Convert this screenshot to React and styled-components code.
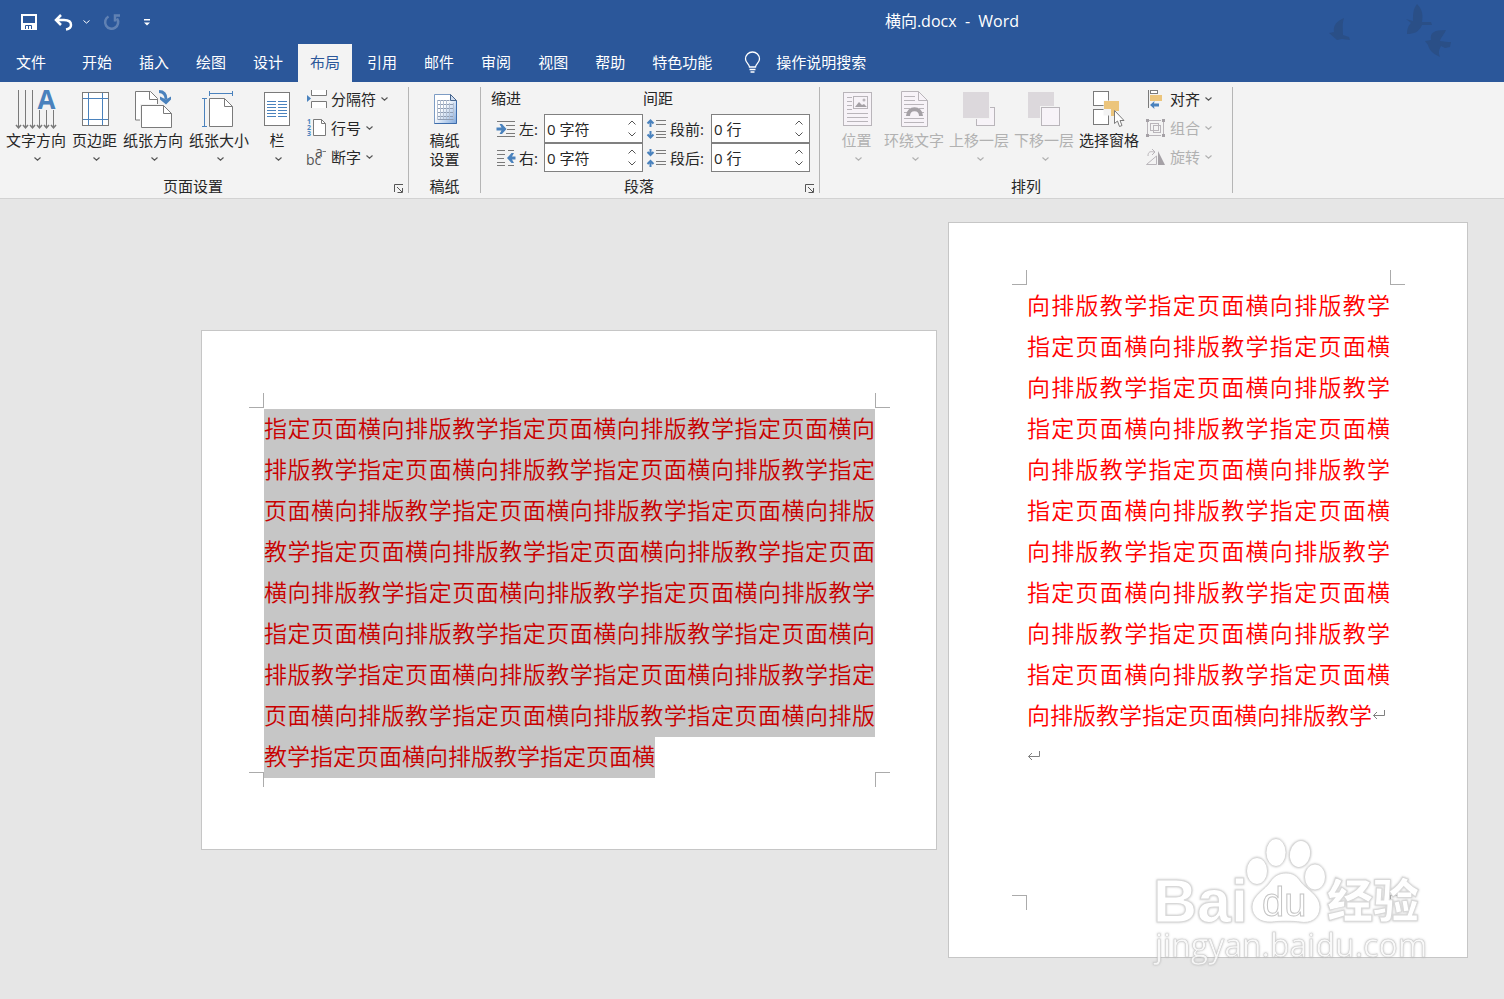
import React from 'react'
import styled, { createGlobalStyle } from "styled-components";

const GlobalStyle = createGlobalStyle`
    body {
        margin: 0;
        background: #e6e6e6;
    }

    button, input {
        font: inherit;
        color: inherit;
        margin: 0;
        padding: 0;
        border: 0;
        background: none;
    }

    svg {
        flex: none;
        overflow: visible;
    }
`

const App = styled.div`
    display: flex;
    flex-direction: column;
    min-height: 100vh;
    font-family: "Open Sans", "Noto Sans CJK SC", sans-serif;
    font-size: 15px;
    line-height: 20px;
    color: #262626;
`

/* title bar and tabs */

const Header = styled.header`
    position: relative;
    background: #2b579a;
    color: #fff;
`

const TitleBar = styled.div`
    display: flex;
    align-items: center;
    height: 44px;
`

const QuickAccess = styled.div`
    display: flex;
    align-items: center;
    width: 386px;
    padding-left: 14px;
`

const QuickButton = styled.button`
    display: flex;
    justify-content: center;
    width: ${props => props.$width}px;
    opacity: ${props => props.disabled ? 0.25 : 1};
`

const Title = styled.h1`
    flex: 1;
    margin: 0;
    padding-bottom: 2px;
    font-size: 16px;
    font-weight: 400;
    text-align: center;
    white-space: pre;
`

const Birds = styled.svg`
    position: absolute;
    top: 0;
    right: 40px;
`

const Tabs = styled.nav`
    display: flex;
    gap: 3px;
    height: 38px;
`

const Tab = styled.button`
    padding: 0 12px 2px;
    white-space: nowrap;
    background: ${props => props.$active ? "#f3f3f3" : "transparent"};
    color: ${props => props.$active ? "#2b579a" : "#fff"};
`

const FileTab = styled(Tab)`
    width: 67px;
    padding-left: 16px;
    text-align: left;
`

const TellMe = styled(Tab)`
    display: flex;
    align-items: center;
    gap: 15px;
    padding-left: 17px;
`

/* ribbon */

const Ribbon = styled.section`
    display: flex;
    padding: 5px 0;
    background: #f3f3f3;
    border-bottom: 1px solid #d2d2d2;
`

const Group = styled.div`
    display: flex;
    flex-direction: column;
    flex: none;
    box-sizing: border-box;
    width: ${props => props.$width}px;
    height: 106px;
    border-right: 1px solid #b5b5b5;
`

const GroupBody = styled.div`
    display: flex;
    flex: 1;
    gap: ${props => props.$gap || 0}px;
    padding-left: ${props => props.$indent || 0}px;
    justify-content: ${props => props.$center ? "center" : "flex-start"};
`

const GroupFooter = styled.div`
    display: flex;
    align-items: center;
    height: 14px;
    padding-right: ${props => props.$launcher ? 4 : 0}px;
`

const GroupName = styled.span`
    flex: 1;
    text-align: center;
    line-height: 14px;
`

const Launcher = styled.button`
    display: flex;
    align-items: flex-end;
    width: 10px;
    height: 14px;
    margin-left: 8px;
`

const BigButton = styled.button`
    display: flex;
    flex-direction: column;
    align-items: center;
    align-self: flex-start;
    min-width: ${props => props.$min || 0}px;
    padding-top: 2px;
    white-space: pre;
    color: ${props => props.disabled ? "#b1b1b1" : "#262626"};
`

const BigLabel = styled.span`
    line-height: 19px;
`

const BigArrow = styled.span`
    display: flex;
    align-items: center;
    height: 18px;
    padding-left: 3px;
`

const SmallColumn = styled.div`
    display: flex;
    flex-direction: column;
    gap: 5px;
`

const SmallButton = styled.button`
    display: flex;
    align-items: center;
    gap: 3px;
    height: 24px;
    padding-left: 1px;
    white-space: nowrap;
    color: ${props => props.disabled ? "#b1b1b1" : "#262626"};
`

const SmallArrow = styled.span`
    display: flex;
    padding-left: 2px;
`

const Fields = styled.div`
    width: ${props => props.$width}px;
`

const FieldsTitle = styled.div`
    height: 27px;
    line-height: 23px;
`

const Field = styled.div`
    display: flex;
    align-items: center;
    height: 29px;
    padding-left: ${props => props.$indent}px;
`

const FieldLabel = styled.label`
    flex: none;
    width: ${props => props.$width}px;
    padding-left: 3px;
    white-space: nowrap;
`

const Spin = styled.div`
    display: flex;
    flex: 1;
    min-width: 0;
    box-sizing: border-box;
    height: 29px;
    border: 1px solid #808080;
    background: #fff;
`

const SpinInput = styled.input`
    flex: 1;
    min-width: 0;
    padding-left: 2px;
    outline: none;
`

const SpinButtons = styled.div`
    display: flex;
    flex-direction: column;
    gap: 3px;
    width: 21px;
    padding: 3px 0;
`

const SpinButton = styled.button`
    display: flex;
    flex: 1;
    align-items: center;
    justify-content: center;
`

/* document */

const Workspace = styled.main`
    display: flex;
    flex: 1;
    align-items: center;
    justify-content: flex-end;
    gap: 11px;
    padding: 23px 36px 41px;
    background: #e6e6e6;
`

const Sheet = styled.article`
    position: relative;
    flex: none;
    box-sizing: border-box;
    width: ${props => props.$landscape ? 736 : 520}px;
    height: ${props => props.$landscape ? 520 : 736}px;
    padding: ${props => props.$landscape ? "77px 61px 77px 62px" : "62px 77px 62px 78px"};
    border: 1px solid #c6c6c6;
    background: #fff;
`

const TextArea = styled.div`
    position: relative;
    display: flow-root;
    height: 100%;
`

const Corner = styled.i`
    position: absolute;
    width: 14px;
    height: 14px;
    border: 0 solid #ababab;
    ${props => props.$y}: -15px;
    ${props => props.$x}: -15px;
    border-${props => props.$y === "top" ? "bottom" : "top"}-width: 1px;
    border-${props => props.$x === "left" ? "right" : "left"}-width: 1px;
`

const Story = styled.div`
    margin-top: -1px;
    font-family: "Noto Sans CJK SC", sans-serif;
    font-size: 23px;
    font-weight: 350;
    line-height: 41px;
    text-align: justify;
    color: #f00;
`

const Paragraph = styled.p`
    margin: 0;
`

const Selection = styled.span`
    padding: 1px 0 6px;
    background: #c6c6c6;
    color: #c80000;
`

const Mark = styled.svg`
    vertical-align: 3px;
`

const Watermark = styled.svg`
    position: absolute;
    right: 37px;
    bottom: -13px;
`

const GREY = "#7a7a7a";
const BLUE = "#4a82bd";
const DIM = "#b9b5ba";

const Chevron = ({ color = "#555", up }) => (
    <svg width="7" height="4" fill="none" stroke={color} strokeWidth="1.2">
        <path d={up ? "M.5 3.5l3-3 3 3" : "M.5.5l3 2.6 3-2.6"} />
    </svg>
)

const SpinArrow = ({ up }) => (
    <svg width="8" height="5" fill="none" stroke="#555">
        <path d={up ? "M.5 4.500l3.500-3.500 3.500 3.500" : "M.5.500l3.500 3.500 3.500-3.500"} />
    </svg>
)

const BigIcon = ({ width = 48, children, color = GREY }) => (
    <svg width={width} height="42" fill="none" stroke={color}>{children}</svg>
)

const SmallIcon = ({ children, color = GREY }) => (
    <svg width="22" height="20" fill="none" stroke={color}>{children}</svg>
)

const TextDirectionIcon = () => (
    <BigIcon>
        {[6.5, 13.5, 20.5].map(x => <path key={x} d={`M${x} 1v37`} />)}
        {[27.5, 34.5, 41.5].map(x => <path key={x} d={`M${x} 21v17`} />)}
        {[6.5, 13.5, 20.5, 27.5, 34.5, 41.5].map(x => (
            <path key={x} d={`M${x - 2.5} 36l2.5 2.7 2.5-2.7`} strokeWidth="1.6" />
        ))}
        <text x="34.5" y="20" fontSize="26" fontWeight="700" fill={BLUE} stroke="none" textAnchor="middle">A</text>
    </BigIcon>
)

const MarginsIcon = () => (
    <BigIcon width={45}>
        <rect x="10.5" y="3.5" width="26" height="33" fill="#fff" />
        <path d="M16.5 4v32M30.5 4v32M11 9.5h25M11 30.5h25" stroke={BLUE} />
    </BigIcon>
)

const OrientationIcon = () => (
    <BigIcon>
        <path d="M6.5 2.5h15l7 7v21.5h-22z" fill="#fff" />
        <path d="M20.5 2.5v8h8" />
        <path d="M12.5 16.5h22l8 8v14h-30z" fill="#fff" stroke="#f3f3f3" strokeWidth="3" />
        <path d="M12.5 16.5h22l8 8v14h-30z" fill="#fff" />
        <path d="M34.5 16.5v8h8" />
        <path d="M30 2.5c5 0 7 3 7 8" stroke={BLUE} strokeWidth="3" />
        <path d="M31 7.500l6 3 5-3v3l-5 5-6-5z" fill={BLUE} stroke="none" />
    </BigIcon>
)

const SizeIcon = () => (
    <BigIcon>
        <path d="M14.500 9.500h15l8 8v20h-23z" fill="#fff" />
        <path d="M29.500 9.500v8h8" />
        <path d="M14.500 4.500h23M14.500 2v5M37.500 2v5M9.500 9.500v28M7 9.500h5M7 37.500h5" stroke={BLUE} />
    </BigIcon>
)

const ColumnsIcon = () => (
    <BigIcon width={44}>
        <rect x="9.500" y="3.500" width="25" height="33" fill="#fff" />
        {[12.5, 15.5, 18.5, 21.5, 24.5, 27.5].map(y => (
            <path key={y} d={`M12 ${y}h9M23 ${y}h9`} stroke={BLUE} />
        ))}
    </BigIcon>
)

const ManuscriptIcon = () => (
    <BigIcon>
        <defs>
            <linearGradient id="sheet" x1="0" y1="0" x2="1" y2="1">
                <stop offset="0.4" stopColor="#fff" />
                <stop offset="1" stopColor="#7fa8dd" />
            </linearGradient>
        </defs>
        <path d="M13.500 5.500h16l6 6v23h-22z" fill="url(#sheet)" stroke="#7d9cc4" />
        <path d="M35.500 12v22.500h-22" stroke="#3d6cab" />
        <path d="M29.500 5.500v6h6z" fill="#cfdcef" stroke="#47658d" />
        <path d="M16.500 11.500h12M16.500 15.500h16M16.500 19.500h16M16.500 23.500h16M16.500 27.500h16M16.500 30.500h16" stroke="#8f9db3" />
        <path d="M16.500 11v19M19.500 11v19M22.500 11v19M25.500 11v19M28.500 14v16M32.500 14v16" stroke="#b4c0d2" />
    </BigIcon>
)

const PositionIcon = () => (
    <BigIcon width={44} color={DIM}>
        <rect x="8.500" y="3.500" width="28" height="33" fill="#f7f3f8" />
        <path d="M12 8.500h5M12 12.500h5M12 16.500h5M12 20.500h5M12 24.500h21M12 28.500h21M12 32.500h21" />
        <rect x="18.500" y="7.500" width="14" height="12" />
        <path d="M20 18l4-5 3 3 2-1 3 3z" fill="#a5a1a6" stroke="none" />
        <circle cx="29" cy="11" r="1.500" fill={DIM} stroke="none" />
    </BigIcon>
)

const WrapIcon = () => (
    <BigIcon color={DIM}>
        <path d="M11.500 2.500h17l9 9v26h-26z" fill="#f7f3f8" />
        <path d="M28.500 2.500v9h9M14 7.500h11M14 11.500h11M14 15.500h20M14 19.500h6M29 19.500h5M14 23.500h3M31 23.500h3M14 29.500h20M14 33.500h20" />
        <path d="M18 27c0-9 13-9 13 0" stroke="#a5a1a6" strokeWidth="4" />
    </BigIcon>
)

const ForwardIcon = () => (
    <BigIcon color={DIM}>
        <rect x="21.500" y="18.500" width="18" height="18" fill="#f7f3f8" />
        <rect x="7" y="2" width="28" height="28" fill="#f3f3f3" stroke="none" />
        <rect x="8" y="3" width="26" height="26" fill="#dcd8dc" stroke="none" />
    </BigIcon>
)

const BackwardIcon = () => (
    <BigIcon color={DIM}>
        <rect x="8" y="3" width="26" height="26" fill="#dcd8dc" stroke="none" />
        <rect x="20" y="17" width="21" height="21" fill="#f3f3f3" stroke="none" />
        <rect x="21.500" y="18.500" width="18" height="18" fill="#f7f3f8" />
    </BigIcon>
)

const SelectionPaneIcon = () => (
    <BigIcon>
        <rect x="8.500" y="2.500" width="15" height="14" fill="#fff" />
        <rect x="8.500" y="20.500" width="15" height="15" fill="#fff" />
        <path d="M18.500 11.500h16v11h-9v4h-7z" fill="#f3f3f3" stroke="none" />
        <path d="M19 12h15v10h-5v5h-3v-7h-7z" fill="#ecc57c" stroke="none" />
        <path d="M29.500 21.500v13l3-2.500 2 5.500 2.500-1-2-5h4z" fill="#fff" />
    </BigIcon>
)

const BreaksIcon = () => (
    <SmallIcon>
        <path d="M5.500 1v5.500h15v-5.500M5.500 19v-6.500h15v6.500" fill="#fff" />
        <path d="M1 6l4 3.500-4 3.500z" fill={BLUE} stroke="none" />
    </SmallIcon>
)

const LineNumbersIcon = () => (
    <SmallIcon>
        <path d="M7.500 1.500h8l4 4v12h-12z" fill="#fff" />
        <path d="M15.500 1.500v4h4" />
        <g fill={BLUE} stroke="none" fontSize="7" fontWeight="700">
            <text x="1" y="6">1</text>
            <text x="1" y="12">2</text>
            <text x="1" y="18">3</text>
        </g>
    </SmallIcon>
)

const HyphenIcon = () => (
    <SmallIcon>
        <g fill="#555" stroke="none" fontSize="14">
            <text x="0" y="18">bc</text>
            <text x="9" y="10">a</text>
        </g>
        <path d="M16.500 4.500h3.500" />
    </SmallIcon>
)

const AlignIcon = () => (
    <SmallIcon>
        <path d="M3.500 1v18" />
        <rect x="5.500" y="1.500" width="7" height="3" fill="#fff" />
        <rect x="5" y="6" width="12" height="6" fill="#ecc57c" stroke="none" />
        <path d="M5 16l4.500-4-.500 2.500h5v3h-5l.500 2.500z" fill={BLUE} stroke="none" />
    </SmallIcon>
)

const GroupIcon = () => (
    <SmallIcon color={DIM}>
        <path d="M2.500 4v12M4 2.500h12M18.500 4v12M4 17.500h12" />
        <rect x="5.500" y="5.500" width="8" height="7" />
        <rect x="8.500" y="7.500" width="7" height="7" />
        <path d="M1 1h3v3h-3zM17 1h3v3h-3zM1 16h3v3h-3zM17 16h3v3h-3z" fill="#a5a1a6" stroke="none" />
    </SmallIcon>
)

const RotateIcon = () => (
    <SmallIcon color={DIM}>
        <path d="M11.500 9v8.500h-10z" />
        <path d="M13 4l7 14h-7z" fill="#a5a1a6" stroke="none" />
        <path d="M3 9c0-4 2-5 6-4M7 2l3 3-3 3" />
    </SmallIcon>
)

const IndentIcon = ({ right }) => (
    <svg width="20" height="18" fill="none" stroke={GREY}>
        <path d={right ? "M1 1.500h8M1 5.500h8M1 9.500h7M1 13.500h8M1 16.500h8M12 1.500h6M12 16.500h6" : "M1 1.500h18M10 5.500h9M11 9.500h8M10 13.500h9M1 16.500h18"} />
        <path
            d={right ? "M11 9l4.500-5h2.500l-2 3.500h3.500v3h-3.500l2 3.500h-2.500z" : "M10.500 9l-4.500-5h-2.500l2 3.500h-5v3h5l-2 3.500h2.500z"}
            fill={BLUE} stroke="none"
        />
    </svg>
)

const SpacingIcon = ({ after }) => (
    <svg width="20" height="20" fill="none" stroke={GREY}>
        <path d={after ? "M9 2.500h10M9 5.500h10M9 13.500h10M9 16.500h10" : "M9 1.500h10M9 5.500h10M9 12.500h10M9 15.500h10M9 18.500h10"} />
        {after
            ? <path d="M3.500 1v6M.5 4l3 3 3-3M3.500 19v-6M.5 16l3-3 3 3" stroke={BLUE} strokeWidth="2" />
            : <path d="M3.500 2v6M.5 4.500l3-3 3 3M3.500 12v6M.5 15.500l3 3 3-3" stroke={BLUE} strokeWidth="2" />}
    </svg>
)

const Big = ({ icon, label, min, disabled, plain }) => (
    <BigButton $min={min} disabled={disabled}>
        {icon}
        <BigLabel>{label}</BigLabel>
        {!plain && <BigArrow><Chevron color={disabled ? "#b1b1b1" : undefined} /></BigArrow>}
    </BigButton>
)

const Small = ({ icon, label, disabled }) => (
    <SmallButton disabled={disabled}>
        {icon}
        <span>{label}</span>
        <SmallArrow><Chevron color={disabled ? "#b1b1b1" : undefined} /></SmallArrow>
    </SmallButton>
)

const Footer = ({ name, launcher }) => (
    <GroupFooter $launcher={launcher}>
        <GroupName>{name}</GroupName>
        {launcher && (
            <Launcher aria-label={name + "设置"}>
                <svg width="10" height="9" fill="none" stroke="#555">
                    <path d="M.5 8V.5H9M3 3l5 5M8.500 4v4.500h-5" />
                </svg>
            </Launcher>
        )}
    </GroupFooter>
)

const SpinField = ({ id, icon, label, value, indent, labelWidth }) => (
    <Field $indent={indent}>
        {icon}
        <FieldLabel htmlFor={id} $width={labelWidth}>{label}</FieldLabel>
        <Spin>
            <SpinInput id={id} defaultValue={value} />
            <SpinButtons>
                <SpinButton aria-label="增加"><SpinArrow up /></SpinButton>
                <SpinButton aria-label="减少"><SpinArrow /></SpinButton>
            </SpinButtons>
        </Spin>
    </Field>
)

const Corners = () => (
    <>
        <Corner $x="left" $y="top" />
        <Corner $x="right" $y="top" />
        <Corner $x="left" $y="bottom" />
        <Corner $x="right" $y="bottom" />
    </>
)

const ParagraphMark = () => (
    <Mark width="14" height="12" fill="none" stroke="#808080">
        <path d="M12.500 1v5.500H1.500M5 3L1.500 6.500 5 10" />
    </Mark>
)

const BaiduMark = () => (
    <Watermark width="280" height="140" aria-label="Baidu 经验">
        <defs>
            <filter id="soft" x="-5%" y="-5%" width="110%" height="110%">
                <feDropShadow dx="0" dy="0" stdDeviation="1" floodColor="#999" floodOpacity=".6" />
            </filter>
        </defs>
        <g fill="#fff" stroke="#d8d8d8" strokeWidth="1" filter="url(#soft)">
            <text x="3" y="92" fontFamily="Liberation Sans" fontWeight="700" fontSize="61">Bai</text>
            <ellipse cx="107" cy="41" rx="10.500" ry="13.500" />
            <ellipse cx="126" cy="22.500" rx="10" ry="14" />
            <ellipse cx="150" cy="24" rx="10.500" ry="13.500" transform="rotate(12 150 24)" />
            <ellipse cx="165" cy="47" rx="10.500" ry="13" />
            <path d="M136 43c7 0 11 3 15 9 5 7 19 13 19 25 0 12-10 17-20 15-6-1-22-1-28 0-12 1-20-6-20-15 0-12 13-17 18-25 4-6 9-9 16-9z" />
            <text x="112" y="86" fontFamily="Liberation Sans" fontSize="40" stroke="#c4c4c4">du</text>
            <text x="177" y="87" fontFamily="Noto Sans CJK SC" fontWeight="900" fontSize="46">经验</text>
        </g>
        <text x="5" y="127" fontFamily="Open Sans" fontSize="32" fill="#fff" fillOpacity=".8" stroke="#ccc" strokeWidth=".5" filter="url(#soft)">jingyan.baidu.com</text>
    </Watermark>
)

const PHRASE = "指定页面横向排版教学";
const CONTENT = PHRASE.repeat(39);
const SECTION_BREAK = 225;

const TABS = ["开始", "插入", "绘图", "设计", "布局", "引用", "邮件", "审阅", "视图", "帮助", "特色功能"];

const Word = () => {
    return (
        <App>
            <GlobalStyle />
            <Header>
                <Birds width="136" height="60" fill="#2a4f87">
                    <path d="M1 33l5-1c-1-7 3-11 10-14-2 6-1 10-1 17l6 2 1 3-8-1-5 1z" />
                    <path d="M78 19l7 2c0-7 0-12 4-17 6 6 6 12 5 18l9 0 1 3-10 0c-3 7-8 9-15 9 0-6 2-9 4-11z" />
                    <path d="M97 41l6-1c-1-7 2-10 15-10-2 5-5 7-6 11l8 1 3 0-1 5-5 1-4-2c-2 4-3 6-1 11-7-3-11-7-12-12z" />
                </Birds>
                <TitleBar>
                    <QuickAccess>
                        <QuickButton $width={30} aria-label="保存">
                            <svg width="16" height="16" fill="none" stroke="#fff" strokeWidth="2">
                                <path d="M1 1h14v14H1zM1 10h14" />
                                <path d="M2 10h12v5H2z" fill="#fff" stroke="none" />
                                <path d="M4.500 15v-3.500h6v3.500M7.500 12v3" stroke="#2b579a" strokeWidth="1" />
                            </svg>
                        </QuickButton>
                        <QuickButton $width={39} aria-label="撤消">
                            <svg width="19" height="17" fill="none" stroke="#fff" strokeWidth="2.500">
                                <path d="M7 1L2 6l5 5M2 6h8c5 0 7 2 7 5s-2 4-5 4.500" />
                            </svg>
                        </QuickButton>
                        <QuickButton $width={7} aria-label="撤消列表"><svg width="7" height="4" fill="none" stroke="#fff"><path d="M.5.500l3 2.600 3-2.600" /></svg></QuickButton>
                        <QuickButton $width={43} disabled aria-label="重复">
                            <svg width="18" height="17" fill="none" stroke="#fff" strokeWidth="2.500">
                                <path d="M5.500 2.500A6.500 6.500 0 1 0 14 4.500M17 1.500h-5v6" />
                            </svg>
                        </QuickButton>
                        <QuickButton $width={28} aria-label="自定义快速访问工具栏">
                            <svg width="6" height="7" fill="#fff"><path d="M0 0h6v1.500H0zM0 3.500h6L3 6.500z" /></svg>
                        </QuickButton>
                    </QuickAccess>
                    <Title>{"横向.docx  -  Word"}</Title>
                </TitleBar>
                <Tabs>
                    <FileTab>文件</FileTab>
                    {TABS.map(name => <Tab key={name} $active={name === "布局"}>{name}</Tab>)}
                    <TellMe>
                        <svg width="17" height="21" fill="none" stroke="#fff" strokeWidth="1.300">
                            <path d="M5.500 15c0-3-4-4-4-8a7 7 0 0 1 14 0c0 4-4 5-4 8zM5.500 17.500h6M6.500 20h4" />
                        </svg>
                        操作说明搜索
                    </TellMe>
                </Tabs>
            </Header>

            <Ribbon>
                <Group $width={409}>
                    <GroupBody $gap={6} $indent={6}>
                        <Big icon={<TextDirectionIcon />} label="文字方向" />
                        <Big icon={<MarginsIcon />} label="页边距" />
                        <Big icon={<OrientationIcon />} label="纸张方向" />
                        <Big icon={<SizeIcon />} label="纸张大小" />
                        <Big icon={<ColumnsIcon />} label="栏" min={44} />
                        <SmallColumn>
                            <Small icon={<BreaksIcon />} label="分隔符" />
                            <Small icon={<LineNumbersIcon />} label="行号" />
                            <Small icon={<HyphenIcon />} label="断字" />
                        </SmallColumn>
                    </GroupBody>
                    <Footer name="页面设置" launcher />
                </Group>
                <Group $width={72}>
                    <GroupBody $center>
                        <Big icon={<ManuscriptIcon />} label={"稿纸\n设置"} plain />
                    </GroupBody>
                    <Footer name="稿纸" />
                </Group>
                <Group $width={339}>
                    <GroupBody $indent={10}>
                        <Fields $width={152}>
                            <FieldsTitle>缩进</FieldsTitle>
                            <SpinField id="left" icon={<IndentIcon />} label="左:" value="0 字符" indent={5} labelWidth={25} />
                            <SpinField id="right" icon={<IndentIcon right />} label="右:" value="0 字符" indent={5} labelWidth={25} />
                        </Fields>
                        <Fields $width={167}>
                            <FieldsTitle>间距</FieldsTitle>
                            <SpinField id="before" icon={<SpacingIcon />} label="段前:" value="0 行" indent={4} labelWidth={41} />
                            <SpinField id="after" icon={<SpacingIcon after />} label="段后:" value="0 行" indent={4} labelWidth={41} />
                        </Fields>
                    </GroupBody>
                    <Footer name="段落" launcher />
                </Group>
                <Group $width={413}>
                    <GroupBody $gap={5} $indent={14}>
                        <Big icon={<PositionIcon />} label="位置" min={45} disabled />
                        <Big icon={<WrapIcon />} label="环绕文字" disabled />
                        <Big icon={<ForwardIcon />} label="上移一层" disabled />
                        <Big icon={<BackwardIcon />} label="下移一层" disabled />
                        <Big icon={<SelectionPaneIcon />} label="选择窗格" plain />
                        <SmallColumn>
                            <Small icon={<AlignIcon />} label="对齐" />
                            <Small icon={<GroupIcon />} label="组合" disabled />
                            <Small icon={<RotateIcon />} label="旋转" disabled />
                        </SmallColumn>
                    </GroupBody>
                    <Footer name="排列" />
                </Group>
            </Ribbon>

            <Workspace>
                <Sheet $landscape>
                    <TextArea>
                        <Corners />
                        <Story>
                            <Paragraph><Selection>{CONTENT.slice(0, SECTION_BREAK)}</Selection></Paragraph>
                        </Story>
                    </TextArea>
                </Sheet>
                <Sheet>
                    <TextArea>
                        <Corners />
                        <Story>
                            <Paragraph>{CONTENT.slice(SECTION_BREAK)}<ParagraphMark /></Paragraph>
                            <Paragraph><ParagraphMark /></Paragraph>
                        </Story>
                    </TextArea>
                    <BaiduMark />
                </Sheet>
            </Workspace>
        </App>
    );
}

export default Word;
